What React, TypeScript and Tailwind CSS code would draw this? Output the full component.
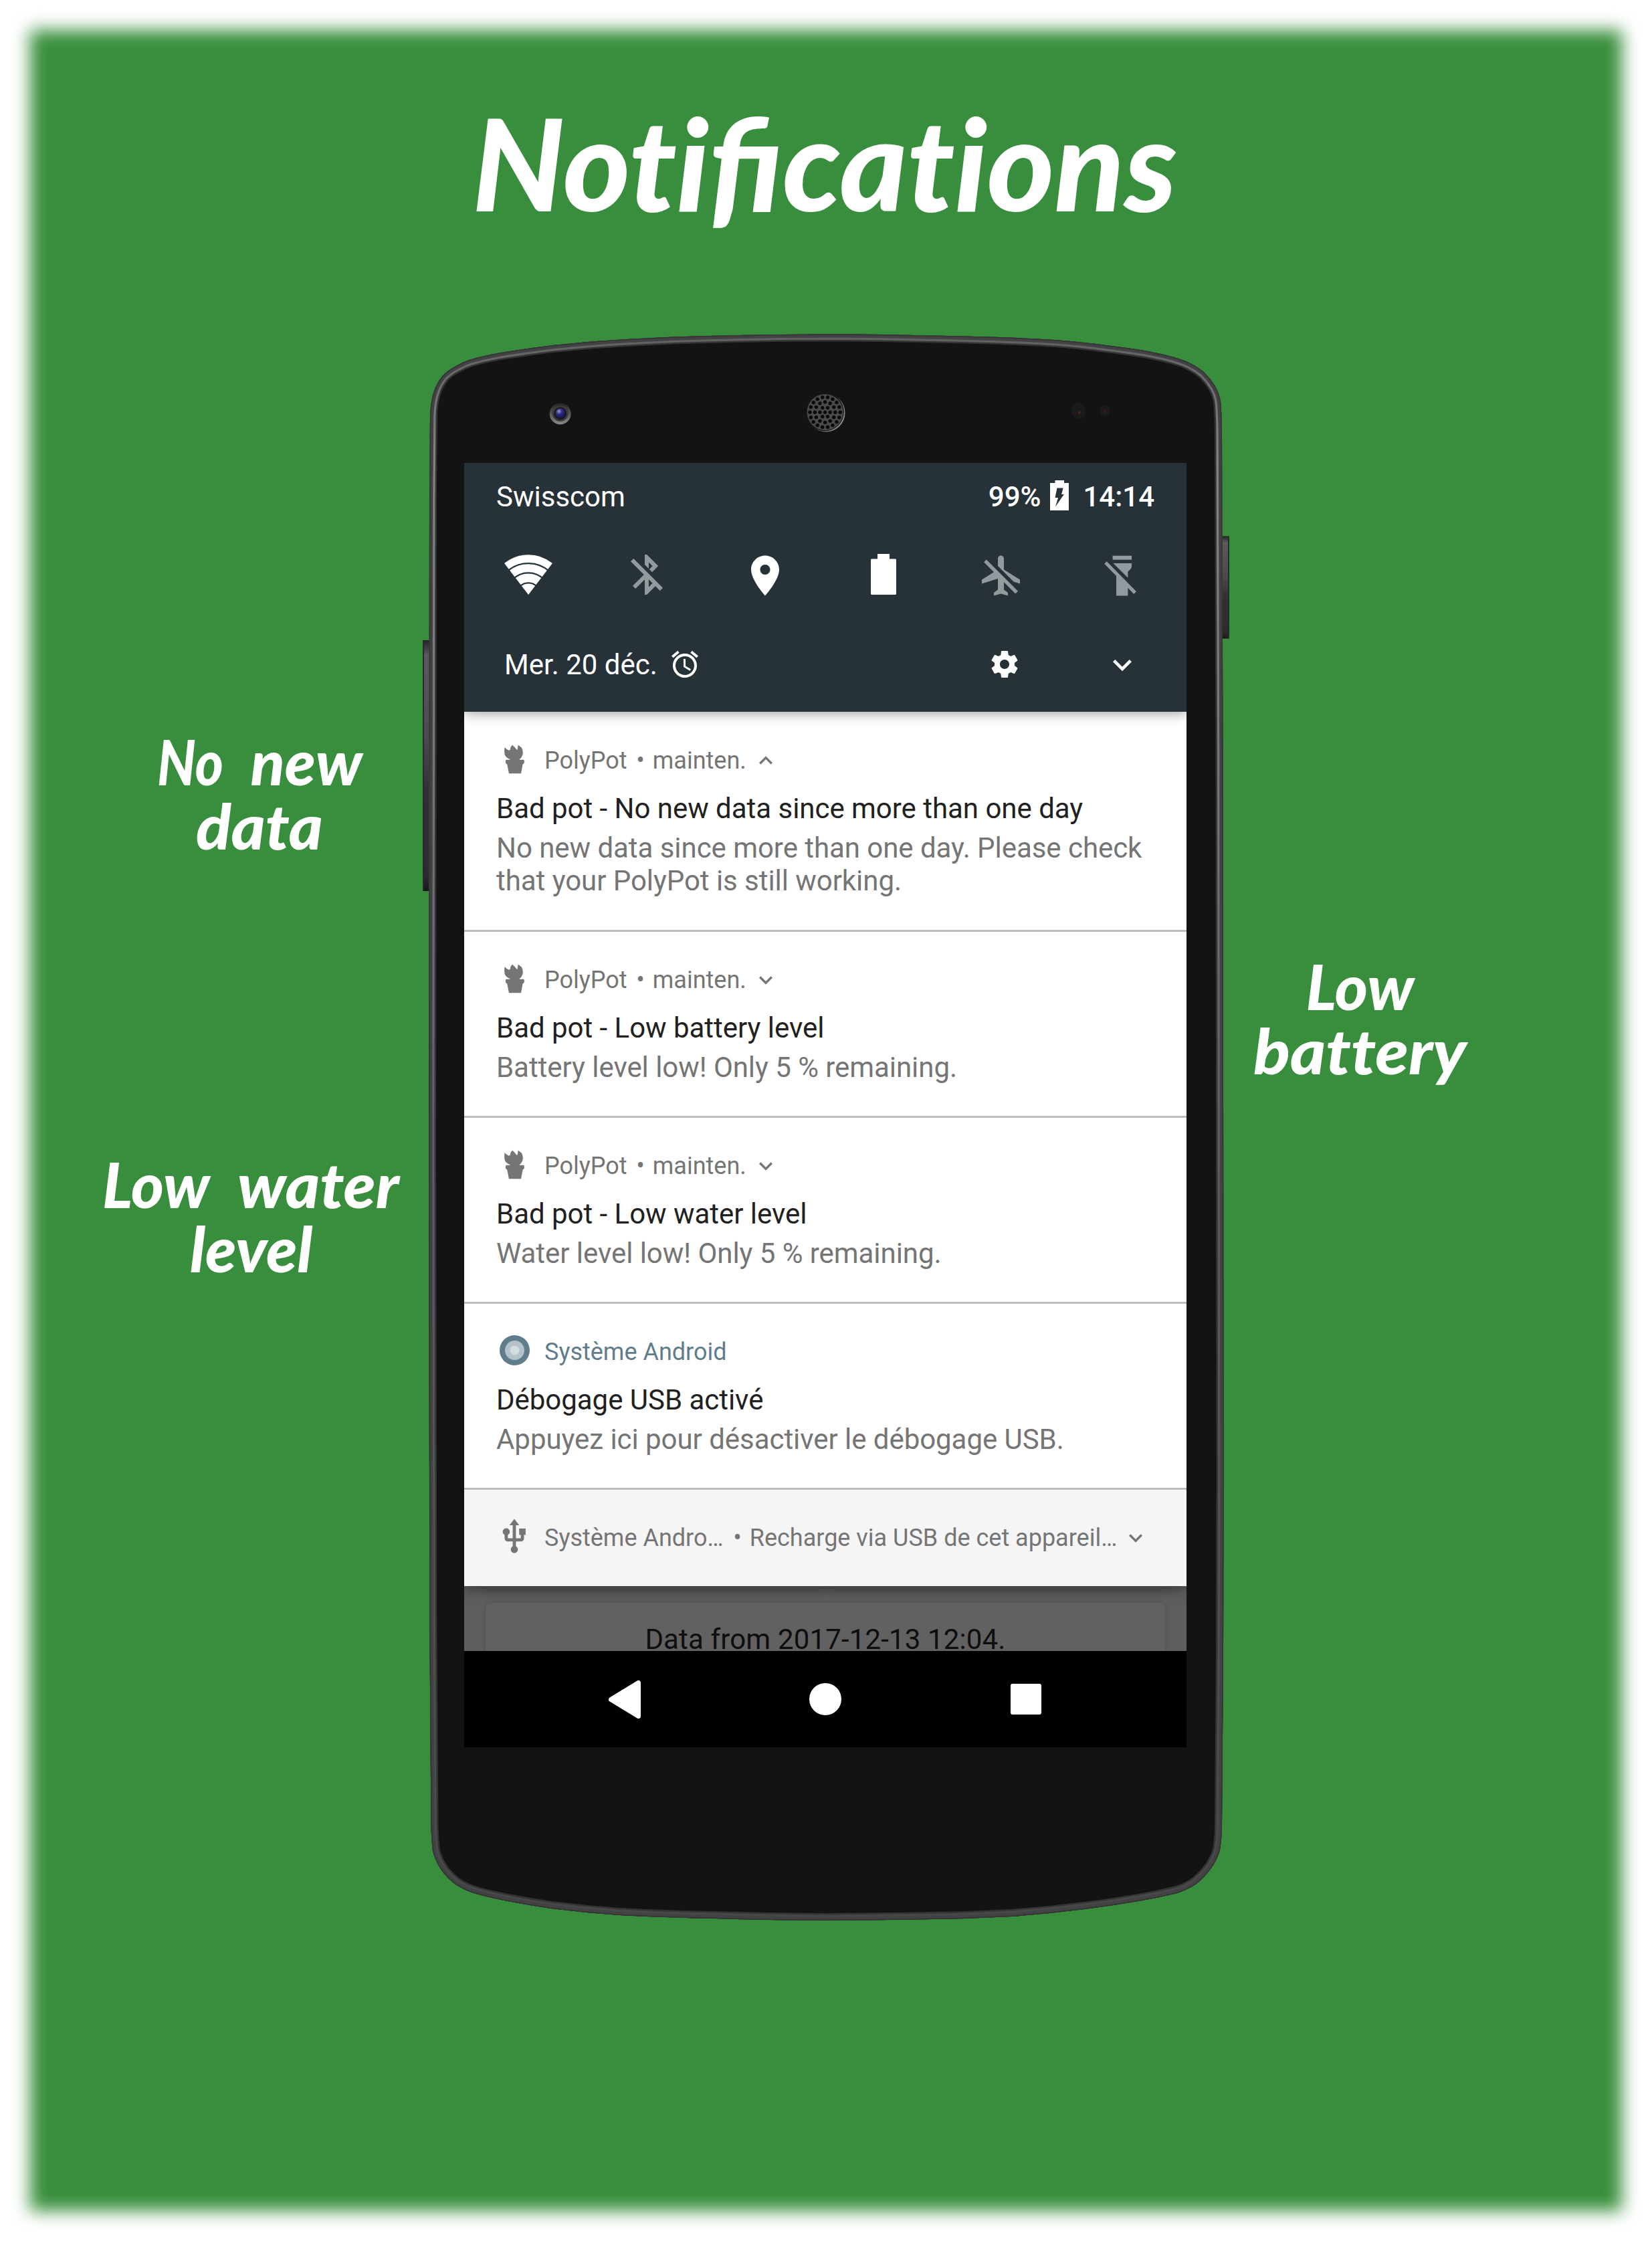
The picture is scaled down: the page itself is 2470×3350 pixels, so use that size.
import { useLayoutEffect, useRef, useState, type ReactNode } from "react";

const FONT_UI = "font-[Roboto,sans-serif]";

/* A word of display lettering stretched to a given width. */
function Word({ children, width }: { children: ReactNode; width: number }) {
  const ref = useRef<HTMLSpanElement>(null);
  const [scale, setScale] = useState(1);
  useLayoutEffect(() => {
    if (ref.current) setScale(width / ref.current.offsetWidth);
  }, [width]);
  return (
    <span className="block" style={{ width }}>
      <span
        ref={ref}
        className="inline-block origin-left whitespace-nowrap [font-variant-ligatures:none]"
        style={{ transform: `scaleX(${scale})` }}
      >
        {children}
      </span>
    </span>
  );
}

type LabelLine = [string, number][];

function Label({ lines, className }: { lines: LabelLine[]; className: string }) {
  return (
    <div
      className={`flex flex-col items-center font-[Lato,sans-serif] text-[94px] leading-[96px] font-black text-white italic ${className}`}
    >
      {lines.map((line, i) => (
        <div key={i} className="flex gap-[41px]">
          {line.map(([text, width]) => (
            <Word key={text} width={width}>
              {text}
            </Word>
          ))}
        </div>
      ))}
    </div>
  );
}

function Icon({ d, className }: { d: string; className: string }) {
  return (
    <svg viewBox="0 0 24 24" fill="currentColor" className={`shrink-0 ${className}`}>
      <path d={d} />
    </svg>
  );
}

const PATHS = {
  bluetoothOff:
    "M13 5.83l1.88 1.88-1.6 1.6 1.41 1.41 3.02-3.02L12 2h-1v5.03l2 2v-3.2zM5.41 4L4 5.41 10.59 12 5 17.59 6.41 19 11 14.41V22h1l4.29-4.29 2.3 2.29L20 18.59 5.41 4zM13 18.17v-3.76l1.88 1.88L13 18.17z",
  place:
    "M12 2C8.13 2 5 5.13 5 9c0 5.25 7 13 7 13s7-7.75 7-13c0-3.87-3.13-7-7-7zm0 9.5c-1.38 0-2.5-1.12-2.5-2.5s1.12-2.5 2.5-2.5 2.5 1.12 2.5 2.5-1.12 2.5-2.5 2.5z",
  planeOff:
    "M13 9V3.5c0-.83-.67-1.5-1.5-1.5S10 2.67 10 3.5v3.68l7.83 7.83L21 16v-2l-8-5zM3 5.27l4.99 4.99L2 14v2l8-2.5V19l-2 1.5V22l3.5-1 3.5 1v-1.5L13 19v-3.73L18.73 21 20 19.73 4.27 4 3 5.27z",
  torchOff:
    "M8.2 2.1H17.7V4.1H8.2zM8.5 5.8H17.7V7.3C17.6 8.5 16.8 9.2 15.8 9.9V13.1zM5.25 4.95L20 19.9L18.75 21.2L15.8 18.1V22H10V12.2L4.05 6.1z",
  alarm:
    "M22 5.72l-4.6-3.86-1.29 1.53 4.6 3.86L22 5.72zM7.88 3.39L6.6 1.86 2 5.71l1.29 1.53 4.59-3.85zM12.5 8H11v6l4.75 2.85.75-1.23-4-2.37V8zM12 4c-4.97 0-9 4.03-9 9s4.02 9 9 9c4.97 0 9-4.03 9-9s-4.03-9-9-9zm0 16c-3.87 0-7-3.13-7-7s3.13-7 7-7 7 3.13 7 7-3.13 7-7 7z",
  settings:
    "M19.43 12.98c.04-.32.07-.64.07-.98s-.03-.66-.07-.98l2.11-1.65c.19-.15.24-.42.12-.64l-2-3.46c-.12-.22-.39-.3-.61-.22l-2.49 1c-.52-.4-1.08-.73-1.69-.98l-.38-2.65C14.46 2.18 14.25 2 14 2h-4c-.25 0-.46.18-.49.42l-.38 2.65c-.61.25-1.17.59-1.69.98l-2.49-1c-.23-.09-.49 0-.61.22l-2 3.46c-.13.22-.07.49.12.64l2.11 1.65c-.04.32-.07.65-.07.98s.03.66.07.98l-2.11 1.65c-.19.15-.24.42-.12.64l2 3.46c.12.22.39.3.61.22l2.49-1c.52.4 1.08.73 1.69.98l.38 2.65c.03.24.24.42.49.42h4c.25 0 .46-.18.49-.42l.38-2.65c.61-.25 1.17-.59 1.69-.98l2.49 1c.23.09.49 0 .61-.22l2-3.46c.12-.22.07-.49-.12-.64l-2.11-1.65zM12 15.5c-1.93 0-3.5-1.57-3.5-3.5s1.57-3.5 3.5-3.5 3.5 1.57 3.5 3.5-1.57 3.5-3.5 3.5z",
  down: "M16.59 8.59L12 13.17 7.41 8.59 6 10l6 6 6-6z",
  up: "M12 8l-6 6 1.41 1.41L12 10.83l4.59 4.58L18 14z",
  usb: "M15 7v4h1v2h-3V5h2l-3-4-3 4h2v8H8v-2.07c.7-.37 1.2-1.08 1.2-1.93 0-1.21-.99-2.2-2.2-2.2-1.21 0-2.2.99-2.2 2.2 0 .85.5 1.56 1.2 1.93V13c0 1.11.89 2 2 2h3v3.05c-.71.37-1.2 1.1-1.2 1.95 0 1.22.99 2.2 2.2 2.2 1.21 0 2.2-.98 2.2-2.2 0-.85-.49-1.58-1.2-1.95V15h3c1.11 0 2-.89 2-2v-2h1V7h-4z",
};

const BODY =
  "M642 748 L643 622 Q643.5 605 647 591 Q651 575 661.5 562 Q670 553 682 547 Q692 541 703 537.5 Q722 532 744 528 Q785 521 827 516 L885 510.6 Q930 507 976.5 505 Q1040 502 1105 501 Q1170 499.5 1235 499.5 Q1300 499.5 1365 501 Q1430 502 1493.5 504 Q1535 505.5 1576.6 508 Q1606 510 1634.6 513.5 L1688.5 520.5 Q1714 524 1738 529.5 Q1756 533.5 1771.4 539.3 Q1788 546 1800.4 556.5 Q1810 566 1817 577.6 Q1823.5 589 1825.3 602.5 Q1827 625 1827 652 L1828.5 1126 L1829.6 2200 L1829 2470 L1827 2727 Q1827 2748 1823.7 2767 Q1819 2782 1810 2794 Q1801 2806 1789 2816 Q1776 2825 1760 2830 Q1732 2837 1705 2841.5 Q1663 2849 1621 2854 Q1567 2861 1511.5 2865 Q1440 2869 1368 2869.6 L1235 2871 Q1150 2870.5 1069 2868 Q1000 2867 926 2863 Q875 2859.5 824 2853 Q782 2847 742 2838.500 Q726 2835.200 710 2830.500 Q695 2826 681 2817 Q669 2808 661 2797 Q651 2783 647 2767 Q645 2750 644.5 2730 L642.4 2440 L641 1700 Z";

const SPEAKER_HOLES = [
  { r: 0, n: 1 },
  { r: 7.6, n: 6 },
  { r: 15.2, n: 12 },
  { r: 22.6, n: 18 },
].flatMap(({ r, n }) =>
  Array.from({ length: n }, (_, i) => {
    const t = (i * 2 * Math.PI) / n;
    return { x: 1233.6 + r * Math.cos(t), y: 616.2 + r * Math.sin(t) };
  }),
);

function PhoneBody() {
  return (
    <svg viewBox="632 499 1206 2372" className="absolute inset-0 h-[2372px] w-[1206px]">
      <defs>
        <clipPath id="bodyClip">
          <path d={BODY} />
        </clipPath>
        <linearGradient id="rimLight" x1="0" y1="0" x2="0" y2="1">
          <stop offset="0" stopColor="#5f5f61" />
          <stop offset="0.08" stopColor="#828284" />
          <stop offset="0.25" stopColor="#77777a" />
          <stop offset="0.55" stopColor="#5a5a5c" />
          <stop offset="1" stopColor="#474747" />
        </linearGradient>
        <linearGradient id="buttonL" x1="0" y1="0" x2="0" y2="1">
          <stop offset="0" stopColor="#222" />
          <stop offset="0.06" stopColor="#5a5a5a" />
          <stop offset="0.4" stopColor="#4a4a4a" />
          <stop offset="0.6" stopColor="#303030" />
          <stop offset="0.94" stopColor="#2c2c2c" />
          <stop offset="1" stopColor="#161616" />
        </linearGradient>
        <radialGradient id="lens" cx="0.35" cy="0.3" r="0.8">
          <stop offset="0" stopColor="#9aa4c8" />
          <stop offset="0.35" stopColor="#2f2f8c" />
          <stop offset="1" stopColor="#0b0b3a" />
        </radialGradient>
        <linearGradient id="ring" x1="0" y1="0" x2="0" y2="1">
          <stop offset="0" stopColor="#222" />
          <stop offset="1" stopColor="#8a8a8a" />
        </linearGradient>
      </defs>
      <rect x="632" y="957" width="14" height="375" rx="2" fill="url(#buttonL)" />
      <rect x="632" y="957" width="2" height="375" fill="#2a2a2a" />
      <rect x="1824" y="801.5" width="14" height="153" rx="2" fill="url(#buttonL)" />
      <rect x="1836" y="801.5" width="2" height="153" fill="#2a2a2a" />
      <path d={BODY} fill="#131313" />
      <g clipPath="url(#bodyClip)" fill="none">
        <path d={BODY} stroke="#343436" strokeWidth="22" />
        <path d={BODY} stroke="url(#rimLight)" strokeWidth="17" />
        <path d={BODY} stroke="#424244" strokeWidth="10.5" />
        <path d={BODY} stroke="#353535" strokeWidth="3" />
      </g>
      <circle cx="837.7" cy="618.5" r="16" fill="url(#ring)" />
      <circle cx="837.7" cy="618" r="12" fill="#3b3b3b" />
      <circle cx="837.7" cy="618" r="9.5" fill="#1a1a1c" />
      <circle cx="838" cy="618" r="7.5" fill="url(#lens)" />
      <circle cx="1235" cy="617" r="28.5" fill="#8a8a8a" />
      <circle cx="1233.2" cy="615.8" r="28.7" fill="#151515" />
      <circle cx="1233.6" cy="616.2" r="27" fill="#4a4a4a" />
      {SPEAKER_HOLES.map((h, i) => (
        <circle key={i} cx={h.x} cy={h.y} r="2.7" fill="#0a0a0a" />
      ))}
      <ellipse cx="1612.6" cy="614" rx="11" ry="12" fill="#1b1a1a" />
      <ellipse cx="1614" cy="616.5" rx="1.5" ry="3" fill="#4a2413" />
      <ellipse cx="1652" cy="614" rx="7.5" ry="8" fill="#1b1a1a" />
      <ellipse cx="1652" cy="615" rx="1.5" ry="3" fill="#3c1f12" />
    </svg>
  );
}

function QuickSettings() {
  return (
    <header className="relative z-20 h-[372px] shrink-0 bg-[#263238] text-white shadow-[0_2px_18px_rgba(0,0,0,0.4)]">
      <div className="flex h-[101px] items-center pr-[48px] pl-[48px] text-[42px] leading-[50px]">
        <span className="flex-1">Swisscom</span>
        <span className="mr-[14px] font-medium">99%</span>
        <svg viewBox="0 0 28 45" className="mr-[21px] h-[45px] w-[28px] -translate-y-[2px]">
          <path
            fill="#fff"
            fillRule="evenodd"
            d="M7.5 0H21V4H28V45H0V4H7.5zM10.5 11.5L7.5 26H12.1L8 39.5L20.8 21H17.1L19.6 11.5z"
          />
        </svg>
        <span className="font-medium">14:14</span>
      </div>
      <div className="grid h-[131px] grid-cols-6 place-items-center pr-[11px] pl-[7px]">
        <svg viewBox="0 0 72 60" className="h-[60px] w-[72px]">
          <path fill="#fff" d="M36 60L0 13Q16 .2 36 .2T72 13z" />
          <g fill="none" stroke="#263238" strokeWidth="2.3">
            <path d="M4 25.500A47.300 47.300 0 0 1 68 25.500" />
            <path d="M13 37A32.500 32.500 0 0 1 59 37" />
            <path d="M23 48.200A17.500 17.500 0 0 1 49 48.200" />
          </g>
        </svg>
        <Icon d={PATHS.bluetoothOff} className="size-[72px] text-[#939a9e]" />
        <Icon d={PATHS.place} className="size-[72px] translate-y-[1.5px]" />
        <svg viewBox="0 0 38 61" className="h-[61px] w-[38px]">
          <path fill="#fff" d="M10 0H28V7.500H37L38 8.500V60L37 61H1L0 60V8.500L1 7.500H10z" />
        </svg>
        <Icon d={PATHS.planeOff} className="size-[72px] translate-y-[1.5px] text-[#939a9e]" />
        <Icon d={PATHS.torchOff} className="size-[72px] translate-y-[1.5px] text-[#939a9e]" />
      </div>
      <div className="flex h-[140px] items-center pr-[68px] pl-[60px] text-[42px] leading-[50px]">
        <span>Mer. 20 déc.</span>
        <Icon d={PATHS.alarm} className="ml-[17px] size-[48px] -translate-y-px" />
        <span className="flex-1" />
        <Icon d={PATHS.settings} className="mr-[124px] size-[48px] -translate-y-px" />
        <Icon d={PATHS.down} className="size-[56px]" />
      </div>
    </header>
  );
}

function PlantIcon() {
  return (
    <svg viewBox="0 0 30 43" fill="currentColor" className="h-[43px] w-[30px] -translate-y-[2.5px]">
      <path d="M.6 3.3C1.500 5.500 4 6.500 6.300 8C8 8.300 9.200 7.500 9 5.700C9.200 3 11 1 12.700 0C13 2 15 2.600 16 4C17.500 6 18 7 19.300 7.300C20.500 5.500 20 2.500 20.800 .3C24 2.500 27 4.500 27.300 8C28 11 28 14 27 15.700C26 18 25 20.500 22.500 21.300H10C6 21.500 1.500 18 .6 14C-.2 10 .2 6 .6 3.300zM8.500 20H23V23H8.500zM3 22.300H29L29.800 23.300V27.300L27.600 29L25 43H7L4.200 29L2 27.300V23.300z" />
    </svg>
  );
}

function AndroidIcon() {
  return (
    <svg viewBox="0 0 45 45" className="size-[45px] -translate-y-[3px]">
      <circle cx="22.500" cy="22.500" r="22.500" fill="#5f7d8a" />
      <circle cx="22.500" cy="22.500" r="14.500" fill="#b5c2c9" />
      <circle cx="22.500" cy="22.500" r="7" fill="#d3dddf" />
    </svg>
  );
}

interface NotificationProps {
  icon: ReactNode;
  app: string;
  info?: string;
  expanded?: boolean;
  accent?: boolean;
  title: string;
  body: string;
  className: string;
}

function Notification({ icon, app, info, expanded, accent, title, body, className }: NotificationProps) {
  return (
    <article className={`shrink-0 border-b-[3px] border-[#bdbdbd] bg-white px-[48px] text-[42px] leading-[49px] ${className}`}>
      <div
        className={`flex h-[48px] items-center text-[36px] leading-[43px] ${accent ? "text-[#607d8b]" : "text-[#757575]"}`}
      >
        <span className="mr-[18px] flex w-[54px] justify-center">{icon}</span>
        <span className="pt-px">{app}</span>
        {info && (
          <>
            <span className="mr-[12px] ml-[14px]">•</span>
            <span className="pt-px">{info}</span>
            <Icon d={expanded ? PATHS.up : PATHS.down} className="ml-[9px] size-[40px]" />
          </>
        )}
      </div>
      <h2 className="mt-[23px] tracking-[-0.03px] whitespace-nowrap text-[#212121]">{title}</h2>
      <p className="mt-[10px] tracking-[-0.05px] text-[#757575]">{body}</p>
    </article>
  );
}

function Screen() {
  return (
    <div className={`relative flex h-[1920px] w-[1080px] flex-col overflow-hidden bg-black ${FONT_UI}`}>
      <QuickSettings />
      <section className="relative z-10 flex shrink-0 flex-col shadow-[0_4px_20px_rgba(0,0,0,0.45)]">
        <Notification
          className="h-[329px] pt-[49px]"
          icon={<PlantIcon />}
          app="PolyPot"
          info="mainten."
          expanded
          title="Bad pot - No new data since more than one day"
          body="No new data since more than one day. Please check that your PolyPot is still working."
        />
        <Notification
          className="h-[278px] pt-[48px]"
          icon={<PlantIcon />}
          app="PolyPot"
          info="mainten."
          title="Bad pot - Low battery level"
          body="Battery level low! Only 5 % remaining."
        />
        <Notification
          className="h-[278px] pt-[48px]"
          icon={<PlantIcon />}
          app="PolyPot"
          info="mainten."
          title="Bad pot - Low water level"
          body="Water level low! Only 5 % remaining."
        />
        <Notification
          className="h-[278px] pt-[48px]"
          icon={<AndroidIcon />}
          accent
          app="Système Android"
          title="Débogage USB activé"
          body="Appuyez ici pour désactiver le débogage USB."
        />
        <div className="flex h-[144px] items-center bg-[#f5f5f5] pl-[48px] text-[36px] leading-[43px] whitespace-nowrap text-[#757575]">
          <span className="mr-[18px] flex w-[54px] justify-center">
            <Icon d={PATHS.usb} className="size-[58px] -translate-y-[2px]" />
          </span>
          <span className="pt-px">Système Andro…</span>
          <span className="mr-[12px] ml-[15px]">•</span>
          <span className="pt-px">Recharge via USB de cet appareil…</span>
          <Icon d={PATHS.down} className="ml-[8px] size-[40px]" />
        </div>
      </section>
      <section className="h-[97px] shrink-0 overflow-hidden bg-[#5e5e5e]">
        <div className="flex h-[2px] gap-[17px] px-[32px]">
          <div className="w-[500px] rounded-b-[4px] bg-[#606060] shadow-[0_3px_8px_rgba(0,0,0,0.35)]" />
          <div className="w-[499px] rounded-b-[4px] bg-[#606060] shadow-[0_3px_8px_rgba(0,0,0,0.35)]" />
        </div>
        <div className="mx-[32px] mt-[23px] h-[120px] rounded-[8px] bg-[#616161] pt-[30px] text-center text-[42px] leading-[50px] tracking-[0.15px] text-[#0e0e0e] shadow-[0_1px_6px_rgba(0,0,0,0.16)]">
          Data from 2017-12-13 12:04.
        </div>
      </section>
      <nav className="flex h-[144px] shrink-0 items-center justify-center bg-black">
        <div className="flex w-[300px] justify-center">
          <svg viewBox="0 0 48 57" className="h-[57px] w-[48px]">
            <path d="M3.500 28.500L44.500 3.500V53.500z" fill="#fff" stroke="#fff" strokeWidth="7" strokeLinejoin="round" />
          </svg>
        </div>
        <div className="flex w-[300px] justify-center">
          <div className="size-[48px] rounded-full bg-white" />
        </div>
        <div className="flex w-[300px] justify-center">
          <div className="size-[46px] rounded-[3px] bg-white" />
        </div>
      </nav>
    </div>
  );
}

export default function App() {
  return (
    <div className="relative h-[3350px] w-[2470px] overflow-hidden bg-white">
      <div className="absolute inset-[45px] bg-[#388e3c] blur-[13px]" />
      <div className="relative flex flex-col">
        <h1 className="mt-[122px] flex h-[240px] justify-center pr-[4px] font-[Lato,sans-serif] text-[190px] leading-[240px] font-black text-white italic">
          <Word width={1054}>
            Noti<span className="[font-variant-ligatures:normal]">fi</span>cations
          </Word>
        </h1>
        <main className="mt-[137px] flex">
          <aside className="w-[632px]">
            <Label
              className="mt-[591px] ml-[234px] w-[308px]"
              lines={[
                [["No", 99], ["new", 167]],
                [["data", 190]],
              ]}
            />
            <Label
              className="mt-[440px] ml-[153px] w-[444px]"
              lines={[
                [["Low", 161], ["water", 242]],
                [["level", 183]],
              ]}
            />
          </aside>
          <div className="relative h-[2372px] w-[1206px] px-[62px] pt-[193px]">
            <PhoneBody />
            <Screen />
          </div>
          <aside className="w-[632px]">
            <Label
              className="mt-[927px] ml-[36px] w-[319px]"
              lines={[[["Low", 162]], [["battery", 319]]]}
            />
          </aside>
        </main>
      </div>
    </div>
  );
}
